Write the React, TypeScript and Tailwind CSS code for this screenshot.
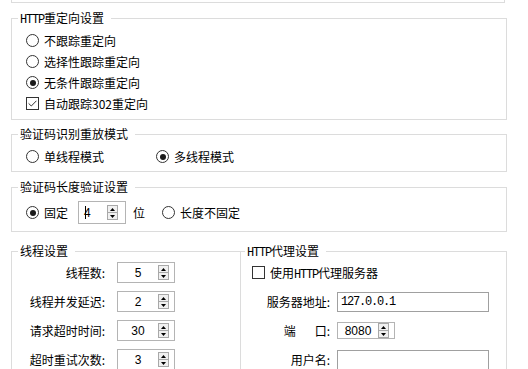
import React from "react";

const cjk = "font-['Noto_Sans_CJK_SC','Microsoft_YaHei',sans-serif]";
const mono = "font-['Liberation_Mono',monospace] text-[12px] tracking-[-1.2px] leading-none";

function Http() {
  return <span className={mono}>HTTP</span>;
}

function Radio({ checked = false, label }: { checked?: boolean; label: React.ReactNode }) {
  return (
    <label className="flex items-center gap-[5px] h-[21px] whitespace-nowrap">
      <span className="w-[13px] h-[13px] shrink-0 rounded-full border border-[#333] bg-white flex items-center justify-center">
        {checked && <span className="w-[6px] h-[6px] rounded-full bg-[#1a1a1a]" />}
      </span>
      <span className="leading-[16px]">{label}</span>
    </label>
  );
}

function Check({ checked = false, label }: { checked?: boolean; label: React.ReactNode }) {
  return (
    <label className="flex items-center gap-[5px] h-[21px] whitespace-nowrap">
      <span className="w-[13px] h-[13px] shrink-0 border border-[#333] bg-white flex items-center justify-center">
        {checked && (
          <svg width="9" height="7" viewBox="0 0 9 7">
            <path d="M0.6 3.4 L3.3 6 L8.4 0.8" fill="none" stroke="#333" strokeWidth="1" />
          </svg>
        )}
      </span>
      <span className="leading-[16px]">{label}</span>
    </label>
  );
}

function Arrows() {
  return (
    <div className="flex flex-col w-[11px] h-[15px] border border-[#a8a8a8] bg-[#f0f0f0] shrink-0">
      <div className="flex-1 flex items-center justify-center border-b border-[#a8a8a8]">
        <svg width="5" height="3" viewBox="0 0 5 3">
          <path d="M2.5 0 L5 3 L0 3Z" fill="#000" />
        </svg>
      </div>
      <div className="flex-1 flex items-center justify-center">
        <svg width="5" height="3" viewBox="0 0 5 3">
          <path d="M0 0 L5 0 L2.5 3Z" fill="#000" />
        </svg>
      </div>
    </div>
  );
}

function Spin({ value, className = "w-[58px] h-[21px]" }: { value: string; className?: string }) {
  return (
    <div className={`flex items-center border border-[#b4b4b4] bg-white pr-[5px] ${className}`}>
      <span className="flex-1 text-center font-['Liberation_Sans',sans-serif] text-[12px] leading-none">
        {value}
      </span>
      <Arrows />
    </div>
  );
}

function Group({
  title,
  className = "",
  bodyClass = "",
  legendClass = "ml-[6px]",
  children,
}: {
  title: React.ReactNode;
  className?: string;
  bodyClass?: string;
  legendClass?: string;
  children: React.ReactNode;
}) {
  return (
    <fieldset className={`border border-[#dcdcdc] min-w-0 ${className}`}>
      <legend className={`h-[16px] pl-[2px] pr-[7px] leading-[16px] whitespace-nowrap ${legendClass}`}>
        {title}
      </legend>
      <div className={bodyClass}>{children}</div>
    </fieldset>
  );
}

function Row({ label, labelClass, children }: { label: React.ReactNode; labelClass: string; children: React.ReactNode }) {
  return (
    <div className="flex items-center h-[21px]">
      <span className={`text-right whitespace-nowrap leading-[16px] ${labelClass}`}>{label}</span>
      {children}
    </div>
  );
}

export default function App() {
  return (
    <div className={`w-[528px] h-[369px] overflow-hidden bg-white text-[12px] text-black ${cjk}`}>
      {/* tail of the group above */}
      <div className="ml-[11px] w-[494px] h-[3px] border-x border-b border-[#dcdcdc]" />

      <div className="ml-[11px] w-[496px] flex flex-col">
        {/* HTTP redirect */}
        <Group title={<><Http />重定向设置</>} className="mt-[7px]" bodyClass="pl-[14px] pt-[4px] pb-[5px]">
          <Radio label="不跟踪重定向" />
          <Radio label="选择性跟踪重定向" />
          <Radio checked label="无条件跟踪重定向" />
          <Check checked label="自动跟踪302重定向" />
        </Group>

        {/* captcha replay mode */}
        <Group title="验证码识别重放模式" className="mt-[6px]" bodyClass="flex pl-[14px] pt-[4px] pb-[4px]">
          <div className="w-[130px]">
            <Radio label="单线程模式" />
          </div>
          <Radio checked label="多线程模式" />
        </Group>

        {/* captcha length */}
        <Group title="验证码长度验证设置" className="mt-[7px]" bodyClass="flex items-center pl-[14px] pt-[6px] pb-[7px]">
          <Radio checked label="固定" />
          <div className="ml-[10px] w-[48px] h-[23px] flex items-center border border-[#b4b4b4] bg-white pl-[6px] pr-[7px]">
            <span className="flex-1 flex items-center font-['Liberation_Sans',sans-serif] leading-none">
              <span className="inline-block w-px h-[13px] bg-black -mr-[2px]" />4
            </span>
            <Arrows />
          </div>
          <span className="ml-[7px] leading-[16px]">位</span>
          <div className="ml-[17px]">
            <Radio label="长度不固定" />
          </div>
        </Group>

        {/* threads + proxy */}
        <div className="mt-[11px] flex">
          <Group title="线程设置" className="w-[230px] h-[140px]" bodyClass="flex flex-col gap-[8px] pt-[3px]">
            <Row label="线程数:" labelClass="w-[93px] mr-[12px]">
              <Spin value="5" />
            </Row>
            <Row label="线程并发延迟:" labelClass="w-[93px] mr-[12px]">
              <Spin value="2" />
            </Row>
            <Row label="请求超时时间:" labelClass="w-[93px] mr-[12px]">
              <Spin value="30" />
            </Row>
            <Row label="超时重试次数:" labelClass="w-[93px] mr-[12px]">
              <Spin value="3" />
            </Row>
          </Group>

          <Group
            title={<><Http />代理设置</>}
            className="w-[266px] h-[140px] border-l-0"
            legendClass="ml-[4px]"
            bodyClass="flex flex-col gap-[8px] pt-[3px] pl-[11px]"
          >
            <Check label={<>使用<Http />代理服务器</>} />
            <Row label="服务器地址:" labelClass="w-[78px] mr-[7px]">
              <div className="w-[152px] h-[20px] border border-[#a0a0a0] flex items-center pl-[3px]">
                <span className={mono}>127.0.0.1</span>
              </div>
            </Row>
            <Row
              label={
                <>
                  端<span className="inline-block w-[19px]" />口:
                </>
              }
              labelClass="w-[78px] mr-[7px]"
            >
              <Spin value="8080" className="w-[58px] h-[17px]" />
            </Row>
            <Row label="用户名:" labelClass="w-[78px] mr-[7px]">
              <div className="w-[152px] h-[20px] border border-[#a0a0a0]" />
            </Row>
          </Group>
        </div>
      </div>
    </div>
  );
}
